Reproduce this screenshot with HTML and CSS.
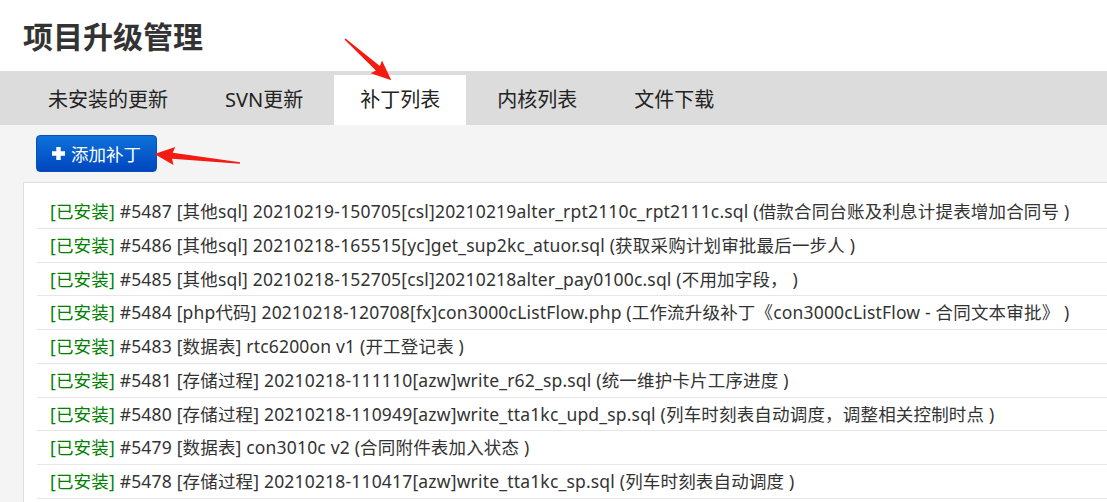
FILE: index.html
```html
<!DOCTYPE html>
<html lang="zh-CN">
<head>
<meta charset="utf-8">
<title>项目升级管理</title>
<link rel="stylesheet" href="styles.css">
</head>
<body>
<header class="page-head">
  <h1 class="page-title">项目升级管理</h1>
</header>
<nav class="tabs">
  <a class="tab">未安装的更新</a>
  <a class="tab">SVN更新</a>
  <a class="tab active">补丁列表</a>
  <a class="tab">内核列表</a>
  <a class="tab">文件下载</a>
</nav>
<main class="content">
  <div class="toolbar">
    <button class="btn-add">
      <svg class="plus" width="13" height="13" viewBox="0 0 13 13"><path d="M4.3 0h4.4v4.3H13v4.4H8.7V13H4.3V8.7H0V4.3h4.3z" fill="#fff"/></svg>
      <span>添加补丁</span>
    </button>
  </div>
  <section class="panel">
    <ul class="patch-list">
      <li><span class="ok">[已安装]</span> #5487 [其他sql] 20210219-150705[csl]20210219alter_rpt2110c_rpt2111c.sql (借款合同台账及利息计提表增加合同号 )</li>
      <li><span class="ok">[已安装]</span> #5486 [其他sql] 20210218-165515[yc]get_sup2kc_atuor.sql (获取采购计划审批最后一步人 )</li>
      <li><span class="ok">[已安装]</span> #5485 [其他sql] 20210218-152705[csl]20210218alter_pay0100c.sql (不用加字段， )</li>
      <li><span class="ok">[已安装]</span> #5484 [php代码] 20210218-120708[fx]con3000cListFlow.php (工作流升级补丁《con3000cListFlow - 合同文本审批》 )</li>
      <li><span class="ok">[已安装]</span> #5483 [数据表] rtc6200on v1 (开工登记表 )</li>
      <li><span class="ok">[已安装]</span> #5481 [存储过程] 20210218-111110[azw]write_r62_sp.sql (统一维护卡片工序进度 )</li>
      <li><span class="ok">[已安装]</span> #5480 [存储过程] 20210218-110949[azw]write_tta1kc_upd_sp.sql (列车时刻表自动调度，调整相关控制时点 )</li>
      <li><span class="ok">[已安装]</span> #5479 [数据表] con3010c v2 (合同附件表加入状态 )</li>
      <li><span class="ok">[已安装]</span> #5478 [存储过程] 20210218-110417[azw]write_tta1kc_sp.sql (列车时刻表自动调度 )</li>
    </ul>
  </section>
</main>
<svg class="annotations" width="1107" height="502" viewBox="0 0 1107 502">
  <g transform="translate(345 39) rotate(41.7)">
    <polygon points="0,-0.8 44,-3 42,-8.5 62,0 42,8.5 44,3 0,0.8" fill="#f31b12"/>
  </g>
  <g transform="translate(240 163) rotate(186.04)">
    <polygon points="0,-0.8 68,-3 66,-9 86,0 66,9 68,3 0,0.8" fill="#f31b12"/>
  </g>
</svg>
</body>
</html>
```

FILE: styles.css
```css
html, body {
  margin: 0;
  padding: 0;
  overflow: hidden;
  background: #fff;
}
body {
  position: relative;
  font-family: "Noto Sans", "Noto Sans CJK SC", sans-serif;
  color: #333;
}
.page-head {
  height: 71px;
  padding-left: 23px;
  box-sizing: border-box;
}
.page-title {
  margin: 0;
  padding-top: 14px;
  font-family: "Noto Sans CJK SC", sans-serif;
  font-size: 30px;
  line-height: 42px;
  font-weight: 700;
  color: #333;
}
.tabs {
  display: flex;
  gap: 5px;
  height: 54px;
  box-sizing: border-box;
  padding: 4px 0 0 22px;
  background: #dcdcdc;
}
.tab {
  display: block;
  height: 50px;
  line-height: 50px;
  padding: 0 26px;
  font-size: 20px;
  color: #222;
}
.tab.active {
  background: #fff;
}
.content {
  background: #f4f4f4;
  padding: 10px 0 0 23px;
  min-height: 400px;
}
.toolbar {
  padding-left: 13px;
  height: 37px;
  margin-bottom: 10px;
}
.btn-add {
  display: flex;
  align-items: center;
  gap: 6px;
  width: 121px;
  height: 37px;
  padding: 0 0 0 15px;
  box-sizing: border-box;
  border: 1px solid #0a4fb8;
  border-radius: 4px;
  background: linear-gradient(#0d72d8, #0046bf);
  color: #fff;
  font-family: "Noto Sans CJK SC", sans-serif;
  font-size: 17.5px;
}
.plus {
  display: block;
  flex: none;
}
.panel {
  background: #fff;
  border: 1px solid #dedede;
  border-right: none;
  padding: 12px 0 20px 13px;
  margin-right: -20px;
}
.patch-list {
  list-style: none;
  margin: 0;
  padding: 0;
}
.patch-list li {
  padding-left: 13px;
  line-height: 32.75px;
  border-bottom: 1px solid #e6e6e6;
  font-size: 17.5px;
  letter-spacing: 0.18px;
  white-space: nowrap;
  color: #333;
}
.ok {
  color: #008000;
}
.annotations {
  position: absolute;
  left: 0;
  top: 0;
  pointer-events: none;
}
```
